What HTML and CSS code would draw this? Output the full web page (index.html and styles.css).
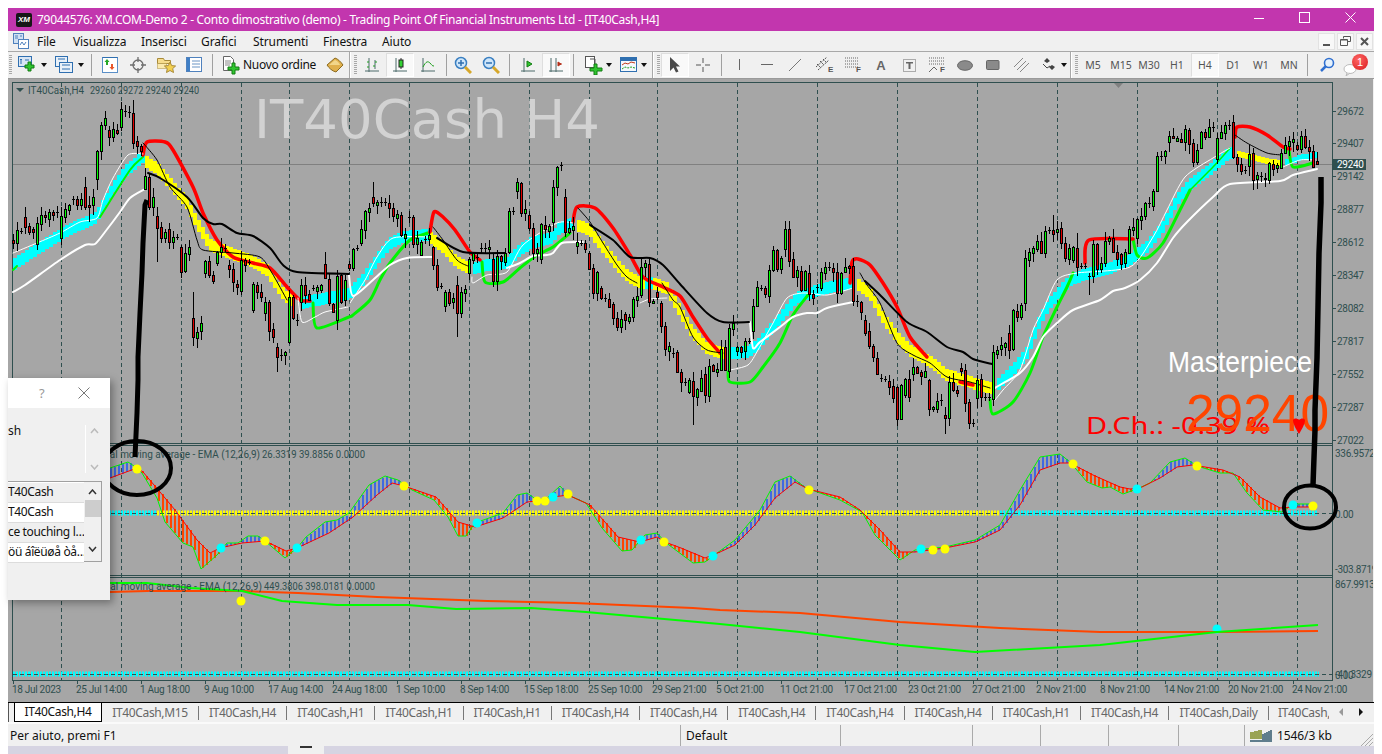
FILE: index.html
```html
<!DOCTYPE html>
<html lang="it">
<head>
<meta charset="utf-8">
<title>MetaTrader</title>
<link rel="stylesheet" href="styles.css">
</head>
<body>
<div class="window">
  <header class="titlebar">
    <span class="xm">XM</span>
    <span class="title">79044576: XM.COM-Demo 2 - Conto dimostrativo (demo) - Trading Point Of Financial Instruments Ltd - [IT40Cash,H4]</span>
    <span class="wbtn"><svg width="12" height="12" viewBox="0 0 12 12"><path d="M1 6.5h10" stroke="#fff"/></svg></span>
    <span class="wbtn"><svg width="12" height="12" viewBox="0 0 12 12"><rect x=".5" y=".5" width="10" height="10" fill="none" stroke="#fff"/></svg></span>
    <span class="wbtn"><svg width="12" height="12" viewBox="0 0 12 12"><path d="M.5.5l10 10M10.5.5l-10 10" stroke="#fff"/></svg></span>
  </header>
  <nav class="menubar">
    <svg class="menuicon" width="16" height="16" viewBox="0 0 16 16"><rect x=".5" y=".5" width="10" height="10" fill="#cfe0f2" stroke="#4f81bd"/><path d="M2 3h3M2 5h3M7 3h2" stroke="#4f81bd"/><rect x="5.5" y="6.5" width="10" height="9" fill="#fff" stroke="#4f81bd"/><path d="M7 12l2-3 2 3 2-3" fill="none" stroke="#4f81bd"/></svg>
    <span class="m m1">File</span><span class="m m2">Visualizza</span><span class="m m3">Inserisci</span><span class="m m4">Grafici</span><span class="m m5">Strumenti</span><span class="m m6">Finestra</span><span class="m m7">Aiuto</span>
    <div class="mdi">
      <span class="mbtn"><svg width="11" height="11" viewBox="0 0 11 11"><path d="M2 9h7" stroke="#555" stroke-width="2"/></svg></span>
      <span class="mbtn"><svg width="11" height="11" viewBox="0 0 11 11"><path d="M3.500 2.500V.5h7v5H8M.5 3.500h7v6h-7z" fill="none" stroke="#555"/><path d="M1 4h6" stroke="#555"/></svg></span>
      <span class="mbtn"><svg width="11" height="11" viewBox="0 0 11 11"><path d="M2 2l7 7M9 2l-7 7" stroke="#555" stroke-width="2"/></svg></span>
    </div>
  </nav>
  <div class="toolbar">
    <i class="grip"></i>
    <span class="i"><svg width="18" height="18" viewBox="0 0 18 18"><rect x=".5" y=".5" width="13" height="10" fill="#d9e6f4" stroke="#2f6fb0"/><path d="M3 3v5M2 4l1-1 1 1M7 4h4" stroke="#2f6fb0" fill="none"/><path d="M10 6h3v3h3v3h-3v3h-3v-3H7V9h3z" fill="#2fc42f" stroke="#127c12"/></svg></span><span class="a"></span>
    <span class="i"><svg width="18" height="18" viewBox="0 0 18 18"><rect x=".5" y=".5" width="12" height="10" fill="#e8f0f8" stroke="#2f6fb0"/><rect x="4.500" y="6.500" width="13" height="10" fill="#e8f0f8" stroke="#2f6fb0"/><path d="M3 3h7M7 9h8M7 13h8" stroke="#2f6fb0"/></svg></span><span class="a"></span>
    <span class="s"></span>
    <span class="i"><svg width="16" height="16" viewBox="0 0 16 16"><rect x=".5" y=".5" width="15" height="15" fill="#fff" stroke="#5a8fc7"/><path d="M5 2L2.500 5H4v3h2V5h1.500z" fill="#27a827"/><path d="M10 13l2.500-3H11V7H9v3H7.500z" fill="#e8562a"/><path d="M.5.500h15" stroke="#2f6fb0"/></svg></span>
    <span class="i"><svg width="16" height="16" viewBox="0 0 16 16"><circle cx="8" cy="8" r="5" fill="none" stroke="#6d6d6d" stroke-width="1.300"/><path d="M8 0v5M8 11v5M0 8h5M11 8h5" stroke="#6d6d6d" stroke-width="1.300"/></svg></span>
    <span class="i"><svg width="19" height="18" viewBox="0 0 19 18"><path d="M.5 2.500h6l1 2h6v3H.5z" fill="#f6dc8c" stroke="#a88a3a"/><path d="M.5 7.500h9v5h-9z" fill="#fbeaae" stroke="#a88a3a" stroke-dasharray="1 1"/><path d="M13 6l1.700 3.600 3.900.4-2.900 2.600.8 3.900L13 14.500 9.500 16.500l.8-3.900-2.900-2.600 3.900-.4z" fill="#f3d04f" stroke="#a88a3a"/></svg></span>
    <span class="i"><svg width="16" height="16" viewBox="0 0 16 16"><rect x=".5" y=".5" width="15" height="14" fill="#fff" stroke="#4f81bd"/><rect x="1" y="1" width="3" height="13" fill="#3f7fc6"/><path d="M6 4h8M6 7h8M6 10h8" stroke="#6a95c4"/></svg></span>
    <span class="s"></span>
    <span class="order"><svg width="18" height="19" viewBox="0 0 18 19"><path d="M.5.500h7l3 3v11h-10z" fill="#fff" stroke="#666"/><path d="M2 5h6M2 7h6M2 9h5" stroke="#888"/><path d="M9 7h3v4h4v3h-4v4H9v-4H5v-3h4z" fill="#2fc42f" stroke="#127c12"/></svg><b>Nuovo ordine</b></span>
    <span class="i"><svg width="18" height="16" viewBox="0 0 18 16"><path d="M1 8L9 1c3 1 6 4 8 7l-7 7c-4-1-7-4-9-7z" fill="#e0b04c" stroke="#8a6a20"/><path d="M3 8l6-5c3 1 4 3 5 5" fill="#f2d68a"/></svg></span>
    <span class="gs"></span><i class="grip"></i>
    <span class="i"><svg width="16" height="16" viewBox="0 0 16 16"><path d="M5 1v14M1 14h14M11 3v9" stroke="#4d6a6a" fill="none"/><path d="M3 5h2M11 5h2M5 10h-2M9 9h2" stroke="#1fa01f"/></svg></span>
    <span class="i on"><svg width="16" height="16" viewBox="0 0 16 16"><path d="M4 1v14M1 14h14" stroke="#4d6a6a" fill="none"/><path d="M9 1v11" stroke="#333"/><rect x="7" y="3" width="4" height="7" fill="#32d132" stroke="#222"/></svg></span>
    <span class="i"><svg width="16" height="16" viewBox="0 0 16 16"><path d="M3 1v14M1 14h14" stroke="#4d6a6a" fill="none"/><path d="M3 10c3-6 5-6 7-4s2 3 4 3" stroke="#1fa01f" fill="none"/></svg></span>
    <span class="s s7"></span>
    <span class="i"><svg width="18" height="18" viewBox="0 0 18 18"><circle cx="7" cy="7" r="5.500" fill="#cfe6fa" stroke="#3a7fc1" stroke-width="1.500"/><path d="M4 7h6M7 4v6" stroke="#2f6fb0" stroke-width="1.500"/><path d="M11 11l6 6" stroke="#d6a72a" stroke-width="3"/></svg></span>
    <span class="i"><svg width="18" height="18" viewBox="0 0 18 18"><circle cx="7" cy="7" r="5.500" fill="#cfe6fa" stroke="#3a7fc1" stroke-width="1.500"/><path d="M4 7h6" stroke="#2f6fb0" stroke-width="1.500"/><path d="M11 11l6 6" stroke="#d6a72a" stroke-width="3"/></svg></span>
    <span class="s"></span>
    <span class="i"><svg width="16" height="16" viewBox="0 0 16 16"><path d="M4 1v14M1 14h14" stroke="#4d6a6a" fill="none"/><path d="M7 4v6l5-3z" fill="#2fc42f" stroke="#127c12"/></svg></span>
    <span class="i on"><svg width="16" height="16" viewBox="0 0 16 16"><path d="M3 1v14M8 1v14M1 14h14" stroke="#4d6a6a" fill="none"/><path d="M14 7l-4 0M10 5v4l3-2z" fill="#b5301a" stroke="#b5301a"/></svg></span>
    <span class="s s12"></span>
    <span class="i n"><svg width="19" height="19" viewBox="0 0 19 19"><rect x=".5" y=".5" width="9" height="11" fill="#fff" stroke="#555"/><path d="M5 3h5v8" fill="none" stroke="#555"/><path d="M9 8h3v4h5v3h-5v4H9v-4H5v-3h4z" fill="#2fc42f" stroke="#127c12"/></svg></span><span class="a"></span>
    <span class="sp2"></span>
    <span class="i n"><svg width="18" height="16" viewBox="0 0 18 16"><rect x=".5" y=".5" width="16" height="14" fill="#f4f8fc" stroke="#2f6fb0"/><path d="M1 1h15v3H1z" fill="#2f6fb0"/><path d="M2 8l3-2 3 1 3-2 4 1" fill="none" stroke="#c23a1a"/><path d="M2 12l3-2 3 1 3-1 4 1" fill="none" stroke="#1fa01f" stroke-dasharray="2 1"/></svg></span><span class="a"></span>
    <span class="sp2"></span>
    <span class="gs"></span><i class="grip"></i>
    <span class="i on"><svg width="12" height="16" viewBox="0 0 12 16"><path d="M1 0v14l3.500-3.500 2.500 5 2.500-1-2.500-5H11z" fill="#4a4a4a"/></svg></span>
    <span class="i"><svg width="16" height="16" viewBox="0 0 16 16"><path d="M8 1v5M8 10v5M1 8h5M10 8h5" stroke="#555"/></svg></span>
    <span class="s s8"></span>
    <span class="i"><svg width="16" height="16" viewBox="0 0 16 16"><path d="M8.500 2v11" stroke="#666"/></svg></span>
    <span class="i"><svg width="16" height="16" viewBox="0 0 16 16"><path d="M2 7.500h12" stroke="#666"/></svg></span>
    <span class="i"><svg width="16" height="16" viewBox="0 0 16 16"><path d="M2 14L14 2" stroke="#777"/></svg></span>
    <span class="sp2"></span>
    <span class="i"><svg width="18" height="16" viewBox="0 0 18 16"><path d="M0 10L11 0M2 13L13 3M1 7l4 4M4 4l4 4M7 2l4 4" stroke="#555" fill="none" stroke-dasharray="2 1"/><text class="ict" x="12" y="15">E</text></svg></span>
    <span class="i"><svg width="18" height="16" viewBox="0 0 18 16"><path d="M1 1h14M1 4h14M1 7h14M1 10h14" stroke="#666" stroke-dasharray="1 1"/><text class="ict" x="12" y="15">F</text></svg></span>
    <span class="i"><span class="ta">A</span></span>
    <span class="i"><svg width="15" height="15" viewBox="0 0 15 15"><rect x="1.500" y="1.500" width="12" height="12" fill="none" stroke="#666" stroke-dasharray="1 1"/><path d="M4 4h7v1.500H8.500V11h-2V5.500H4z" fill="#666"/></svg></span>
    <span class="i"><svg width="18" height="16" viewBox="0 0 18 16"><path d="M1 1h16M1 4h16M1 7h16" stroke="#666" stroke-dasharray="1 1"/><path d="M1 15l5-5 3 3" fill="none" stroke="#666"/><text class="ict" x="12" y="15">F</text></svg></span>
    <span class="i"><svg width="16" height="11" viewBox="0 0 16 11"><ellipse cx="8" cy="5.500" rx="7.500" ry="4.800" fill="#8a8a8a" stroke="#666"/></svg></span>
    <span class="i"><svg width="14" height="11" viewBox="0 0 14 11"><rect x=".5" y=".5" width="12.500" height="9" rx="1" fill="#8a8a8a" stroke="#666"/></svg></span>
    <span class="i"><svg width="15" height="14" viewBox="0 0 15 14"><path d="M0 9L9 0M3 12l9-9M6 14l9-9" stroke="#888"/></svg></span>
    <span class="sp2"></span>
    <span class="i n"><svg width="15" height="14" viewBox="0 0 15 14"><path d="M5 0l3 3-3 2-3-2z M10 7l3 2-3 3-3-3z" fill="#444"/><path d="M1 6l4 4 3-2" stroke="#444" fill="none"/></svg></span><span class="a"></span>
    <span class="gs"></span><i class="grip"></i>
    <span class="p">M5</span><span class="p">M15</span><span class="p">M30</span><span class="p">H1</span><span class="p on">H4</span><span class="p">D1</span><span class="p">W1</span><span class="p">MN</span>
    <span class="s s10"></span>
    <span class="i"><svg width="16" height="16" viewBox="0 0 16 16"><circle cx="10" cy="6" r="4.500" fill="#e6f1fb" stroke="#2f6fd0" stroke-width="1.600"/><path d="M7 9l-5 5" stroke="#2f6fd0" stroke-width="2.500"/></svg></span>
    <span class="i bell"><svg width="14" height="12" viewBox="0 0 14 12"><ellipse cx="7" cy="5" rx="6" ry="4.500" fill="#fff" stroke="#bbb"/><path d="M4 9l-1 3 4-3" fill="#ddd" stroke="#bbb"/></svg><em>1</em></span>
  </div>
  <main class="chartwrap">
    <svg id="chart" width="1365" height="623" viewBox="8 79 1365 623"></svg>
    <section class="dialog">
      <div class="dlgtitle"><span class="help">?</span><svg width="12" height="12" viewBox="0 0 12 12"><path d="M.5.500l11 11M11.500.500l-11 11" stroke="#777"/></svg></div>
      <div class="dlgbody">
        <div class="dlgtop">
          <span class="sh">sh</span>
          <div class="spin"><svg width="9" height="6" viewBox="0 0 9 6"><path d="M1 5l3.500-4L8 5" fill="none" stroke="#bbb" stroke-width="1.500"/></svg><svg width="9" height="6" viewBox="0 0 9 6"><path d="M1 1l3.500 4L8 1" fill="none" stroke="#bbb" stroke-width="1.500"/></svg></div>
        </div>
        <div class="list">
          <div class="rows">
            <div class="row alt">T40Cash</div>
            <div class="row">T40Cash</div>
            <div class="row alt">ce touching l…</div>
            <div class="row">öü áîëüøå òå…</div>
          </div>
          <div class="sbar"><svg width="9" height="6" viewBox="0 0 9 6"><path d="M1 5l3.500-4L8 5" fill="none" stroke="#333" stroke-width="1.500"/></svg><i class="thumb"></i><svg class="dn" width="9" height="6" viewBox="0 0 9 6"><path d="M1 1l3.500 4L8 1" fill="none" stroke="#333" stroke-width="1.500"/></svg></div>
        </div>
      </div>
    </section>
  </main>
  <div class="tabs">
    <i class="tabmark"></i>
    <span class="tab active">IT40Cash,H4</span>
    <span class="tab w1">IT40Cash,M15</span>
    <span class="tab">IT40Cash,H4</span><span class="tab">IT40Cash,H1</span><span class="tab">IT40Cash,H1</span><span class="tab">IT40Cash,H1</span><span class="tab">IT40Cash,H4</span><span class="tab">IT40Cash,H4</span><span class="tab">IT40Cash,H4</span><span class="tab">IT40Cash,H4</span><span class="tab">IT40Cash,H4</span><span class="tab">IT40Cash,H1</span><span class="tab">IT40Cash,H4</span>
    <span class="tab w2">IT40Cash,Daily</span>
    <span class="tab last">IT40Cash,H</span>
    <svg class="tarr" width="26" height="10" viewBox="0 0 26 10"><path d="M5 1v8L1 5z" fill="#999"/><path d="M21 1v8l4-4z" fill="#111"/></svg>
  </div>
  <footer class="status">
    <span class="c c1">Per aiuto, premi F1</span>
    <span class="c c2">Default</span>
    <span class="c c3"></span><span class="c c4"></span><span class="c c5"></span><span class="c c6"></span>
    <span class="c c7"></span>
    <span class="c c8"><svg width="23" height="14" viewBox="0 0 23 14"><path d="M1 4v7M3 4v7M5 3v8M7 3v8M9 2v9M11 2v9" stroke="#6c7a00" stroke-width="1.300"/><path d="M13 6v8M15 5v9M17 4v10M19 3v11M21 2v12M1 12v2M3 12v2M5 12v2M7 12v2M9 12v2M11 12v2" stroke="#123f57" stroke-width="1.300"/></svg>1546/3 kb</span>
    <svg class="rgrip" width="12" height="12" viewBox="0 0 12 12"><path d="M0 12L12 0M4 12L12 4M8 12l4-4" stroke="#aaa"/></svg>
  </footer>
  <div class="desk"><i class="d1"></i><i class="d2"></i></div>
</div>
<script src="app.js"></script>
</body>
</html>
```
FILE: styles.css
```css
*{box-sizing:border-box}
html,body{margin:0;padding:0;background:#fff;overflow:hidden}
body{font-family:"Noto Sans","Open Sans",sans-serif;font-size:12px;color:#111}
.window{width:1366px;height:746px;margin:8px 8px 0;display:flex;flex-direction:column}
.titlebar{height:23px;background:#c236ae;color:#fff;display:flex;align-items:center;padding-left:8px;flex:none}
.xm{width:16px;height:14px;background:#161616;border-radius:2px;color:#fff;font:italic 700 8px "Liberation Sans",sans-serif;display:flex;align-items:center;justify-content:center;margin-right:5px}
.title{flex:1;font-size:12px;font-family:"Noto Sans",sans-serif;letter-spacing:-.3px;white-space:nowrap}
.wbtn{width:46px;display:flex;justify-content:center;margin-top:-3px}
.menubar{height:21px;background:#f0f0f0;border-bottom:1px solid #a8a8a8;display:flex;align-items:center;padding-left:5px;flex:none}
.menuicon{margin-right:8px}
.m{font-size:12px;letter-spacing:-.1px;color:#111;width:auto}
.m1{width:36px}.m2{width:68px}.m3{width:60px}.m4{width:52px}.m5{width:70px}.m6{width:59px}
.mdi{margin-left:auto;display:flex;gap:2px;padding-right:1px}
.mbtn{width:17px;height:17px;background:#f8f8f8;border:1px solid #e2e2e2;display:flex;align-items:center;justify-content:center}
.toolbar{height:27px;background:#f0f0f0;border-bottom:1px solid #9a9a9a;display:flex;align-items:center;flex:none}
.grip{width:5px;height:20px;flex:none;background:repeating-linear-gradient(to bottom,#a8a8a8 0 1px,#f0f0f0 1px 2px);background-clip:content-box;padding:0 1px 0 1px}
.i{width:28px;height:24px;display:flex;align-items:center;justify-content:center;flex:none}
.i.n{width:24px}
.i.on,.p.on{background:#f9f9f9;border:1px solid #dedede;border-right-color:#fff;border-bottom-color:#fff}
.a{width:9px;height:8px;flex:none;position:relative}
.a::before{content:"";position:absolute;left:0;top:2px;border:3px solid transparent;border-top:4px solid #111;border-bottom:0}
.s{width:9px;height:22px;flex:none;position:relative}
.s::before{content:"";position:absolute;left:4px;top:0;height:100%;width:1px;background:#a0a0a0}
.s7{width:7px}.s8{width:8px}.s10{width:10px}.s12{width:12px}
.s12::before{left:3px}
.sp2{width:2px;flex:none}
.gs{width:4px;height:26px;flex:none;background:linear-gradient(to right,#a8a8a8 0 1px,#fff 1px 2px,#f0f0f0 2px)}
.order{width:104px;display:flex;align-items:center;padding-left:6px;flex:none}
.order b{font-weight:400;font-size:12px;margin-left:2px;margin-top:-1px;letter-spacing:-.3px;white-space:nowrap}
.ict{font:700 8px "Liberation Sans",sans-serif;fill:#555}
.ta{font:700 13px "Liberation Sans",sans-serif;color:#666}
.p{width:28px;height:24px;flex:none;display:flex;align-items:center;justify-content:center;font:10.500px "Noto Sans",sans-serif;color:#555}
.bell{position:relative;align-items:flex-end;justify-content:flex-start;padding:0 0 1px 2px}
.bell em{position:absolute;left:11px;top:1px;width:16px;height:16px;border-radius:50%;background:radial-gradient(circle at 40% 35%,#f66,#d81a1a);color:#fff;font:normal 11px "Liberation Sans",sans-serif;text-align:center;line-height:16px}
.chartwrap{height:623px;background:#f0f0f0;position:relative;flex:none}
#chart{display:block;background:#a6a6a6}
#chart text{font-family:"Roboto",sans-serif}
#chart .ax{font-size:10px;fill:#2f4f4f;letter-spacing:-.3px}
#chart .hd{font-size:10.500px;fill:#2f4f4f}
#chart .big{font-family:"DejaVu Sans",sans-serif;font-size:54px;fill:#d2d2d2}
#chart .mp{font-family:"Liberation Sans",sans-serif;font-size:29px;fill:#fff}
#chart .px{font-family:"Liberation Sans",sans-serif;font-size:52px;fill:#ff4500}
#chart .dc{font-family:"Noto Sans",sans-serif;font-size:24px;fill:#f00}
.dialog{position:absolute;left:0;top:299px;width:102px;height:222px;box-shadow:3px 3px 8px rgba(0,0,0,.35);display:flex;flex-direction:column;background:#f0f0f0}
.dlgtitle{height:30px;background:#fff;display:flex;align-items:center;padding-left:31px;gap:33px;color:#999;flex:none}
.help{font-size:13px}
.dlgbody{flex:1;padding-top:13px}
.dlgtop{display:flex;justify-content:space-between;height:60px}
.sh{font-size:12px;line-height:20px}
.spin{width:17px;margin-right:8px;height:48px;margin-top:4px;border-left:1px solid #fff;display:flex;flex-direction:column;justify-content:space-between;align-items:center;padding:3px 0 3px}
.list{width:94px;height:81px;background:#fff;border:1px solid #a0a0a0;border-left:0;display:flex}
.rows{width:76px;flex:none;padding-top:1px}
.row{height:20px;font-size:12px;line-height:18px;border-bottom:1px solid #dcdcdc;background:#fff;white-space:nowrap;overflow:hidden;letter-spacing:-.35px}
.row.alt{background:#efefef}
.sbar{flex:1;background:#f0f0f0;display:flex;flex-direction:column;align-items:center;padding-top:7px}
.thumb{width:16px;height:17px;background:#cdcdcd;margin-top:5px;flex:none}
.dn{margin-top:29px}
.tabs{height:20px;background:#f0f0f0;border-top:1px solid #000;display:flex;align-items:center;font-size:12px;flex:none;position:relative;white-space:nowrap}
.tabmark{width:1px;height:19px;background:#555;margin-right:5px;flex:none}
.tab{width:88.200px;text-align:center;color:#666;border-right:1px solid #777;height:14px;line-height:14px;letter-spacing:-.35px;flex:none}
.tab.active{width:88px;height:19px;line-height:17px;background:#fff;border:1px solid #000;border-top:0;color:#111;margin-top:-1px}
.tab.w1{width:97px}
.tab.w2{width:100px}
.tab.last{width:60px;border:0;overflow:hidden;text-align:left;padding-left:9px;margin-right:0;text-overflow:clip}
.tarr{position:absolute;left:1330px;top:4px}
.status{height:24px;background:#f0f0f0;border-top:2px solid #fafafa;display:flex;align-items:center;flex:none;position:relative}
.c{height:21px;display:flex;align-items:center;font-size:12px;border-left:1px solid #aaa;flex:none}
.c1{width:672px;border:0;padding-left:2px}
.c2{width:160px;padding-left:5px}
.c3{width:132px}.c4{width:68px}.c5{width:68px}.c6{width:70px}.c7{width:66px}
.c8{padding-left:5px;gap:4px;letter-spacing:-.1px}
.rgrip{position:absolute;right:1px;bottom:0}
.desk{height:8px;background:#d6d4e2;display:flex;flex:none;position:relative}
.d1{width:36px;height:8px;margin-left:280px;background:#f0f0f0}
.d2{width:12px;height:2px;background:#333;position:absolute;left:292px;top:0}
```
FILE: app.js
```js
const D = ("r240-243 g230-243 d231 r217-227:207: r226-232 r229-232 g223-244 g215-224 r215-217 g212-219 r212-215 d212 g216-238 g209-217 g205-210 d199 r199-205 g199-205 r187-207:177: r205-207::222 g197-205 g151-179::190 g125-151 g118-125 r130-137 g129-137 r130-133 g109-127 d111 d112 r113-143:100: r141-146 r146-151 g176-189 r177-207 g197-207 r216-228::262 r227-238 g232-238 r229-242 g237-242 d237 r247-272::278 g253-271 g247-254 r318-337:292: g332-338::348 g323-331 g261-273 r261-275 r275-281 g252-263 g247-252 d248 r265-269 r269-282 r284-287 g260-291 r260-265 d262 g284-310 r285-292 r292-297 g302-313 r302-331 r329-337 r347-357:343:372 d355 g352-355 g297-342 r297-318 d320 g285-302 r285-295 r294-300 d288 g287-291 g285-290 r264-278:252: r279-303 r304-312 g276-320 r275-302 g280-300 " +
"r264-268 g249-268 d248 g229-243 g211-230 g208-212 r197-203:182: g202-205 d202 d202 r203-208 r208-216 g214-218 r215-235 g234-238 d217 r217-244 g238-244 g242-255 d239 g235-239 r247-265 r265-287 d286 g292-306 r292-303 g298-302 r285-313::337 g292-313 g289-293 g259-273 g253-260 d257 d248 d248 g247-249 r259-281 g256-281 r256-261 g253-262 g211-252 d211 g182-191 r183-213 g209-213 r215-228 r228-253 g249-253 g224-259 r225-229 g226-231 g187-222 g167-187 d165 r197-232 g228-232 g226-230 g242-246 d243 r243-249 r253-269 r268-293 g272-293 r288-298 d298 r299-307 r304-318 r318-327 g319-327 r314-320 g317-321 g299-317 g296-300 g267-295 g263-267 r264-302 g301-303 r292-297 r303-326 r326-349 g346-351 d353 r352-372 " +
"r372-382 d382 g380-392 r381-396::425 g389-397 g378-391 r374-395 g366-396 r365-371 g369-372 g349-370 r347-370 g328-371 g323-329 g347-351 r347-352 g341-351 d341 g306-331 g287-306 d288 r288-294 g270-296 g250-270 r250-269 g258-269 g229-249 r229-261 r259-277 g270-277 r271-290 g271-290 r273-294 r294-298 d287 g272-288 g267-273 d267 r268-272 r272-293 g273-293 g267-272 r266-268 r266-301 d301 r302-312 r320-333 r331-346 r346-357 r358-374 d378 d379 r381-387 r386-398 r387-419 g385-419 g379-395 r379-397 g367-374 r367-373 r372-376 g371-377 r380-409 g407-409 g401-409 d400 r415-418::434 g382-418 r382-390 r390-393 r368-371 r370-403 r402-423 d423 g380-398 r379-397 d397 d397 g352-399 g350-354 g345-349 g343-347 r333-350 " +
"g310-349 r311-317 g305-317 g258-303 g252-260 g248-253 g241-249 r241-253 g231-253 d230 r230-234:215: g229-232 r228-243 r243-258 g248-259 g247-260 r248-267:233: d266 d266 d276::295 g244-276 r244-269 g263-269 g241-263 g238-241 r238-252 r252-259 r254-264 g252-263 g229-253 g227-230 g219-238 g216-220 g203-216 d203 g191-206 g156-191 d156 g151-156 g136-142 r136-138 g138-141 r139-142 g129-142 r130-144 r143-162 g150-162 g132-148 r132-137 g127-137 d127 g138-159 g132-138 g125-133 d125 r122-157 r157-164 r164-171 d170 g154-166 r153-180 g175-179 d176 r178-179 g163-180 r164-169 g165-168 g153-168 g145-153 g141-146 g139-142 r145-149 g136-149 r136-147 r147-151 r151-167 r161-164").split(/\s+/);

const out = [];
const add = s => out.push(s);
const GREEN = "#00f500";
function smooth(pts) {
  let d = `M${pts[0][0]} ${pts[0][1]}`;
  for (let i = 0; i < pts.length - 1; i++) {
    const p0 = pts[i - 1] || pts[i], p1 = pts[i], p2 = pts[i + 1], p3 = pts[i + 2] || p2;
    const k = 1 / 8;
    const c1x = p1[0] + (p2[0] - p0[0]) * k, c1y = p1[1] + (p2[1] - p0[1]) * k;
    const c2x = p2[0] - (p3[0] - p1[0]) * k, c2y = p2[1] - (p3[1] - p1[1]) * k;
    d += `C${c1x.toFixed(1)} ${c1y.toFixed(1)} ${c2x.toFixed(1)} ${c2y.toFixed(1)} ${p2[0]} ${p2[1]}`;
  }
  return d;
}
function seg(pts, stroke, w) {
  add(`<path fill="none" stroke="${stroke}" stroke-width="${w}" stroke-linejoin="round" stroke-linecap="round" d="${smooth(pts)}"/>`);
}
function at(pts, x) {
  if (x <= pts[0][0]) return pts[0][1];
  for (let i = 1; i < pts.length; i++) {
    if (x <= pts[i][0]) {
      const [a, b] = pts[i - 1], [c, d] = pts[i];
      return b + (d - b) * (x - a) / (c - a);
    }
  }
  return pts[pts.length - 1][1];
}
function ribbon(color, pts, h) {
  let s = "";
  const start = Math.round((pts[0][0] - 1) / 4) * 4 + 1;
  for (let x = start; x < pts[pts.length - 1][0]; x += 4) {
    const y = Math.round(at(pts, x + 2));
    s += `M${x} ${y - h}h4v${h * 2}h-4z`;
  }
  add(`<path d="${s}" fill="${color}" shape-rendering="crispEdges"/>`);
}

/* grid */
const grid = [61,121,181,241,289,349,409,469,529,589,657,737,817,897,977,1057,1137,1217,1297];
grid.forEach(x => add(`<path d="M${x + .5} 83V680" stroke="#2f4f4f" stroke-dasharray="4 3" shape-rendering="crispEdges"/>`));
add(`<path d="M13 164.500H1332" stroke="#808080" shape-rendering="crispEdges"/>`);

/* frames */
add(`<path d="M12.500 82.500H1332.500V680.500H12.500zM12.500 443.500H1332.500M12.500 445.500H1332.500M12.500 575.500H1332.500M12.500 577.500H1332.500" fill="none" stroke="#2f4f4f" shape-rendering="crispEdges"/>`);
add(`<path d="M1114 83h9l-4.500 5z" fill="#808080"/>`);
add(`<path d="M16 88h8l-4 4z" fill="#2f4f4f"/>`);
add(`<text class="big" x="254" y="138" textLength="346" lengthAdjust="spacingAndGlyphs">IT40Cash H4</text>`);
add(`<text class="hd" x="28" y="94" textLength="56" lengthAdjust="spacingAndGlyphs">IT40Cash,H4</text><text class="hd" x="90" y="94" textLength="109" lengthAdjust="spacingAndGlyphs">29260 29272 29240 29240</text>`);

/* ribbons */
const cyan = [
 [[13,265],[33,252],[63,233],[80,225],[97,217],[110,193],[127,170],[143,157]],
 [[302,303],[333,297],[350,293],[363,280],[377,260],[390,243],[403,237],[427,235]],
 [[473,268],[487,265],[507,263],[520,250],[533,242],[553,237],[560,228],[573,223]],
 [[643,283],[650,283]],
 [[730,353],[748,352],[760,343],[773,327],[787,310],[797,298],[813,292],[830,287],[852,283]],
 [[998,385],[1013,370],[1027,353],[1040,320],[1050,303],[1060,292],[1070,280],[1090,273],[1113,267],[1133,258],[1147,247],[1163,227],[1177,200],[1190,185],[1213,167],[1230,153]]
];
const yellow = [
 [[143,160],[157,168],[170,183],[187,203],[197,223],[210,245],[227,252],[250,260],[267,270],[280,290],[290,300]],
 [[430,237],[443,247],[457,262],[468,268]],
 [[575,224],[590,230],[603,247],[617,265],[630,278],[642,283]],
 [[652,283],[667,288],[677,305],[693,333],[707,348],[723,353]],
 [[857,283],[870,293],[883,317],[897,337],[910,350],[933,363],[947,375],[970,382],[990,388]]
];
cyan.forEach(p => ribbon("#00ffff", p, 6));
yellow.forEach(p => ribbon("#ffff00", p, 6));
ribbon("#ffff00", [[1237,153],[1267,161],[1281,163]], 3);
ribbon("#00ffff", [[1285,163],[1300,158],[1316,155]], 3);

/* green & red thick */
[
 [[313,303],[317,328],[349,317],[353,315],[370,300],[380,280],[390,263],[410,240],[428,233]],
 [[482,262],[485,282],[503,282],[520,268],[537,255],[553,247],[570,233]],
 [[728,372],[730,382],[750,382],[763,367],[780,343],[793,315],[808,295]],
 [[990,400],[993,414],[1013,402],[1030,373],[1043,337],[1057,307],[1067,287],[1073,273]],
 [[1133,239],[1137,255],[1147,258],[1163,243],[1180,210],[1190,190]],
 [[1289,150],[1293,167],[1313,163]]
].forEach(p => seg(p, GREEN, 3));
seg([[100,217],[130,170],[143,157]], GREEN, 2);
seg([[1190,190],[1213,167],[1230,148]], GREEN, 1.500);
seg([[13,270],[17,266]], GREEN, 2);
[
 [[143,155],[147,142],[165,142],[173,150],[193,187],[203,213],[217,240],[233,257],[253,263],[270,268],[287,287],[300,300],[310,301]],
 [[430,232],[434,212],[443,217],[455,230],[470,252],[480,260]],
 [[573,222],[577,207],[595,208],[613,228],[630,255],[643,277],[663,287],[680,296],[693,317],[707,338],[720,353]],
 [[850,283],[852,262],[858,259],[870,265],[883,283],[897,307],[910,337],[927,357]],
 [[960,382],[973,385]],
 [[1085,263],[1089,240],[1133,239]],
 [[1235,137],[1237,127],[1250,127],[1267,135],[1283,147],[1290,149]]
].forEach(p => seg(p, "#ff0000", 3.500));

/* thick white / black */
[
 [[13,292],[25,285],[60,260],[85,245],[95,244],[105,232],[120,212],[130,198],[145,189]],
 [[349,275],[353,296],[373,280],[390,265],[407,258],[432,257]],
 [[507,268],[520,263],[533,256],[547,255],[553,253],[562,243],[583,242]],
 [[750,322],[753,348],[760,342],[780,327],[793,317],[807,313],[817,313],[827,308],[853,302]],
 [[995,388],[1000,385],[1020,373],[1033,357],[1043,337],[1057,323],[1073,310],[1100,300],[1113,291],[1125,288],[1140,280],[1157,263],[1173,238],[1187,222],[1213,197],[1230,184],[1280,181],[1293,175],[1317,169]]
].forEach(p => seg(p, "#ffffff", 2));
[
 [[148,173],[160,178],[187,197],[203,218],[213,224],[222,224],[237,233],[253,236],[270,248],[283,265],[297,272],[349,274]],
 [[437,238],[463,252],[505,253]],
 [[590,225],[613,240],[630,257],[650,258],[663,265],[680,284],[707,313],[723,322],[749,322]],
 [[865,281],[880,295],[907,322],[927,332],[947,347],[963,352],[973,359],[992,364]]
].forEach(p => seg(p, "#000", 2));

/* thin lines */
[
 [[13,253],[37,243],[60,233],[80,222],[97,218],[103,200],[113,178],[128,155],[143,154]],
 [[298,298],[302,322],[315,317],[325,312],[348,307]],
 [[350,303],[365,280],[377,257],[393,238],[430,237]],
 [[472,277],[473,283],[487,275],[507,272],[523,245],[557,223],[573,223]],
 [[640,303],[650,299],[667,298]],
 [[730,370],[748,365],[758,350],[773,323],[787,298],[803,293],[827,295],[853,288]],
 [[995,400],[1003,390],[1020,370],[1033,330],[1043,310],[1057,280],[1077,273],[1130,267],[1153,237],[1167,210],[1185,177],[1213,158],[1230,148]],
 [[1283,167],[1300,160],[1315,160]]
].forEach(p => seg(p, "#fff", 1));
[
 [[143,143],[157,160],[170,187],[187,207],[197,240],[203,250],[233,253],[260,257],[272,273],[287,300]],
 [[433,227],[443,240],[457,260],[468,266]],
 [[578,208],[590,222],[603,243],[617,265],[627,277],[637,283]],
 [[662,283],[673,300],[680,307],[693,337],[707,350],[723,353]],
 [[860,273],[867,285],[880,303],[897,343],[913,355],[930,363],[947,377],[970,382],[990,388]],
 [[1235,135],[1247,143],[1267,153],[1282,155]]
].forEach(p => seg(p, "#000", 1));

/* candles */
let seed = 7;
const rnd = n => { seed = (seed * 1103515245 + 12345) & 0x7fffffff; return (seed >> 8) % n; };
let wick = "", gb = "", rb = "", db = "";
D.forEach((t, i) => {
  const cx = 13 + 4 * i;
  const parts = t.split(":");
  const kind = parts[0][0];
  const nums = parts[0].slice(1).split("-").map(Number);
  const top = nums[0], bot = nums[1] === undefined ? nums[0] : nums[1];
  const hi = parts[1] ? +parts[1] : top - (kind === "d" ? 3 + rnd(4) : 1 + rnd(9));
  const lo = parts[2] ? +parts[2] : bot + (kind === "d" ? 3 + rnd(4) : 1 + rnd(10));
  wick += `M${cx + .5} ${hi}V${lo}`;
  if (kind === "d") {
    db += `M${cx - 1} ${top + .5}h3`;
  } else {
    const b = `M${cx - .5} ${top + .5}h2v${Math.max(bot - top, 1)}h-2z`;
    if (kind === "g") gb += b; else rb += b;
  }
});
add(`<g shape-rendering="crispEdges"><path d="${wick}" stroke="#000"/><path d="${db}" stroke="#000"/><path d="${gb}" fill="#00ff00" stroke="#000"/><path d="${rb}" fill="#e00000" stroke="#000"/></g>`);

/* MACD window */
const mg = [[110,468],[128,462],[137,468],[142,473],[157,498],[165,522],[183,543],[193,547],[201,569],[217,555],[227,543],[238,543],[248,536],[258,536],[265,541],[285,558],[298,547],[306,537],[325,522],[337,520],[349,513],[369,485],[385,476],[398,480],[412,490],[434,500],[448,517],[458,536],[466,536],[475,523],[503,513],[517,495],[527,493],[537,500],[547,498],[560,486],[568,495],[586,503],[602,528],[622,551],[632,550],[645,535],[657,533],[665,542],[693,563],[705,562],[713,556],[735,540],[760,510],[775,482],[790,476],[806,488],[840,500],[862,512],[875,535],[900,560],[915,550],[945,547],[975,540],[1000,525],[1020,490],[1040,457],[1060,454],[1070,462],[1087,482],[1102,488],[1110,487],[1123,494],[1137,489],[1150,483],[1170,462],[1185,458],[1197,466],[1220,473],[1233,473],[1247,493],[1263,510],[1282,512],[1293,504],[1313,504]];
const mr = [[110,478],[137,468],[143,472],[160,492],[175,510],[197,540],[210,553],[220,548],[242,543],[265,541],[286,551],[297,548],[329,533],[353,517],[377,495],[392,483],[404,486],[436,497],[458,522],[475,527],[503,518],[527,502],[537,501],[553,497],[568,495],[590,505],[618,537],[640,542],[657,537],[665,542],[681,548],[705,558],[720,552],[735,545],[755,525],[775,498],[795,482],[808,489],[840,497],[860,510],[880,530],[900,552],[915,552],[945,548],[975,542],[1000,530],[1020,505],[1040,470],[1060,463],[1070,463],[1093,475],[1120,487],[1130,489],[1140,488],[1160,478],[1177,467],[1193,465],[1223,470],[1240,477],[1260,497],[1280,508],[1293,507],[1313,507]];
let blue = "", orange = "";
for (let x = 110; x <= 1313; x += 4) {
  const a = Math.round(at(mg, x)), b = Math.round(at(mr, x));
  if (a < b) blue += `M${x + .5} ${a}V${b}`;
  else if (a > b) orange += `M${x + .5} ${b}V${a}`;
}
add(`<path d="${blue}" stroke="#4169e1" stroke-width="2" shape-rendering="crispEdges"/><path d="${orange}" stroke="#ff4500" stroke-width="2" shape-rendering="crispEdges"/>`);
function zero(y, parts) {
  parts.forEach(([a, b, c]) => add(`<path d="M${a} ${y}H${b}" stroke="${c}" stroke-width="5" stroke-dasharray="2 1"/>`));
  add(`<path d="M13 ${y + .5}H1332" stroke="#2f4f4f" stroke-dasharray="4 3" shape-rendering="crispEdges"/>`);
}
zero(513, [[13, 157, "#00ffff"], [157, 1000, "#ffff00"], [1000, 1317, "#00ffff"]]);
add(`<polyline fill="none" stroke="${GREEN}" points="${mg.map(p => p.join(",")).join(" ")}"/>`);
add(`<polyline fill="none" stroke="#ff0000" points="${mr.map(p => p.join(",")).join(" ")}"/>`);
const dot = (x, y, c) => add(`<circle cx="${x}" cy="${y}" r="4.500" fill="${c}"/>`);
[[137,469],[265,541],[404,486],[537,501],[545,501],[568,494],[664,542],[809,490],[933,550],[945,549],[1073,464],[1197,466],[1313,506],[241,601]].forEach(p => dot(p[0], p[1], "#ffff00"));
[[221,548],[297,548],[477,523],[553,497],[641,540],[713,556],[921,549],[1137,489],[1293,505],[1217,629]].forEach(p => dot(p[0], p[1], "#00ffff"));

/* third window */
const stepped = (pts, c) => add(`<polyline fill="none" stroke="${c}" stroke-width="2" points="${pts.map(p => p.join(",")).join(" ")}"/>`);
stepped([[110,592],[147,591],[242,591],[298,593],[377,597],[487,601],[574,603],[693,608],[720,610],[800,613],[900,622],[1000,628],[1100,632],[1220,632],[1318,631]], "#ff4500");
stepped([[110,583],[147,583],[191,588],[242,591],[282,601],[337,605],[408,605],[456,609],[531,608],[586,612],[653,618],[720,624],[800,632],[900,645],[975,652],[1100,645],[1217,632],[1318,625]], "#00ff00");
zero(674, [[13, 1319, "#00ffff"]]);
add(`<text class="hd" x="66" y="458" textLength="194" lengthAdjust="spacingAndGlyphs">Exponential moving average - EMA (12,26,9)</text><text class="hd" x="262" y="458" textLength="103" lengthAdjust="spacingAndGlyphs">26.3319 39.8856 0.0000</text>`);
add(`<text class="hd" x="66" y="590" textLength="196" lengthAdjust="spacingAndGlyphs">Exponential moving average - EMA (12,26,9)</text><text class="hd" x="264" y="590" textLength="111" lengthAdjust="spacingAndGlyphs">449.3806 398.0181 0.0000</text>`);

/* axes */
[[29672,111],[29407,143],[29142,176],[28877,209],[28612,242],[28347,275],[28082,308],[27817,341],[27552,374],[27287,407],[27022,440]].forEach(([t, y]) => {
  add(`<path d="M1333 ${y + .5}h3" stroke="#2f4f4f" shape-rendering="crispEdges"/><text class="ax" x="1337" y="${y + 4}">${t}</text>`);
});
add(`<rect x="1333" y="159" width="33" height="11" fill="#2f4f4f"/><text class="ax" x="1337" y="168" style="fill:#fff">29240</text>`);
[["336.9572",453],["0.00",514],["-303.8719",569],["867.9913",584],["-41.3329",674],["0.00",675]].forEach(([t, y]) => {
  add(`<text class="ax" x="1335" y="${y + 4}">${t}</text>`);
});
["18 Jul 2023","25 Jul 14:00","1 Aug 18:00","9 Aug 10:00","17 Aug 14:00","24 Aug 18:00","1 Sep 10:00","8 Sep 14:00","15 Sep 18:00","25 Sep 10:00","29 Sep 21:00","5 Oct 21:00","11 Oct 21:00","17 Oct 21:00","23 Oct 21:00","27 Oct 21:00","2 Nov 21:00","8 Nov 21:00","14 Nov 21:00","20 Nov 21:00","24 Nov 21:00"].forEach((t, i) => {
  const x = 13 + 64 * i;
  add(`<path d="M${x + .5} 681v3" stroke="#2f4f4f" shape-rendering="crispEdges"/><text class="ax" x="${x - 1}" y="693">${t}</text>`);
});

/* overlay texts */
add(`<text class="mp" x="1168" y="372" textLength="144" lengthAdjust="spacingAndGlyphs">Masterpiece</text>`);
add(`<text class="dc" x="1086" y="434" textLength="184" lengthAdjust="spacingAndGlyphs">D.Ch.: -0.39 %</text>`);
add(`<text class="px" x="1186" y="431" textLength="143" lengthAdjust="spacingAndGlyphs">29240</text>`);
add(`<path d="M1293 420c1-2 4-2 6 0 2-2 5-2 6 0 0 4-3 9-6 14-3-5-6-10-6-14z" fill="#f00"/>`);

/* hand-drawn marks */
add(`<polyline fill="none" stroke="#000" stroke-width="5" stroke-linejoin="round" points="147,200 145,205 143,243 142,273 140,313 138,357 138,380 137,413 135,457"/>`);
add(`<ellipse cx="137" cy="468" rx="34" ry="27" fill="none" stroke="#000" stroke-width="4"/>`);
add(`<polyline fill="none" stroke="#000" stroke-width="5.500" stroke-linejoin="round" points="1321,177 1321,203 1319,253 1318,307 1317,358 1315,410 1315,430 1313,485"/>`);
add(`<ellipse cx="1310" cy="507" rx="26" ry="21.500" fill="none" stroke="#000" stroke-width="4"/>`);

document.getElementById("chart").innerHTML = out.join("");
```
